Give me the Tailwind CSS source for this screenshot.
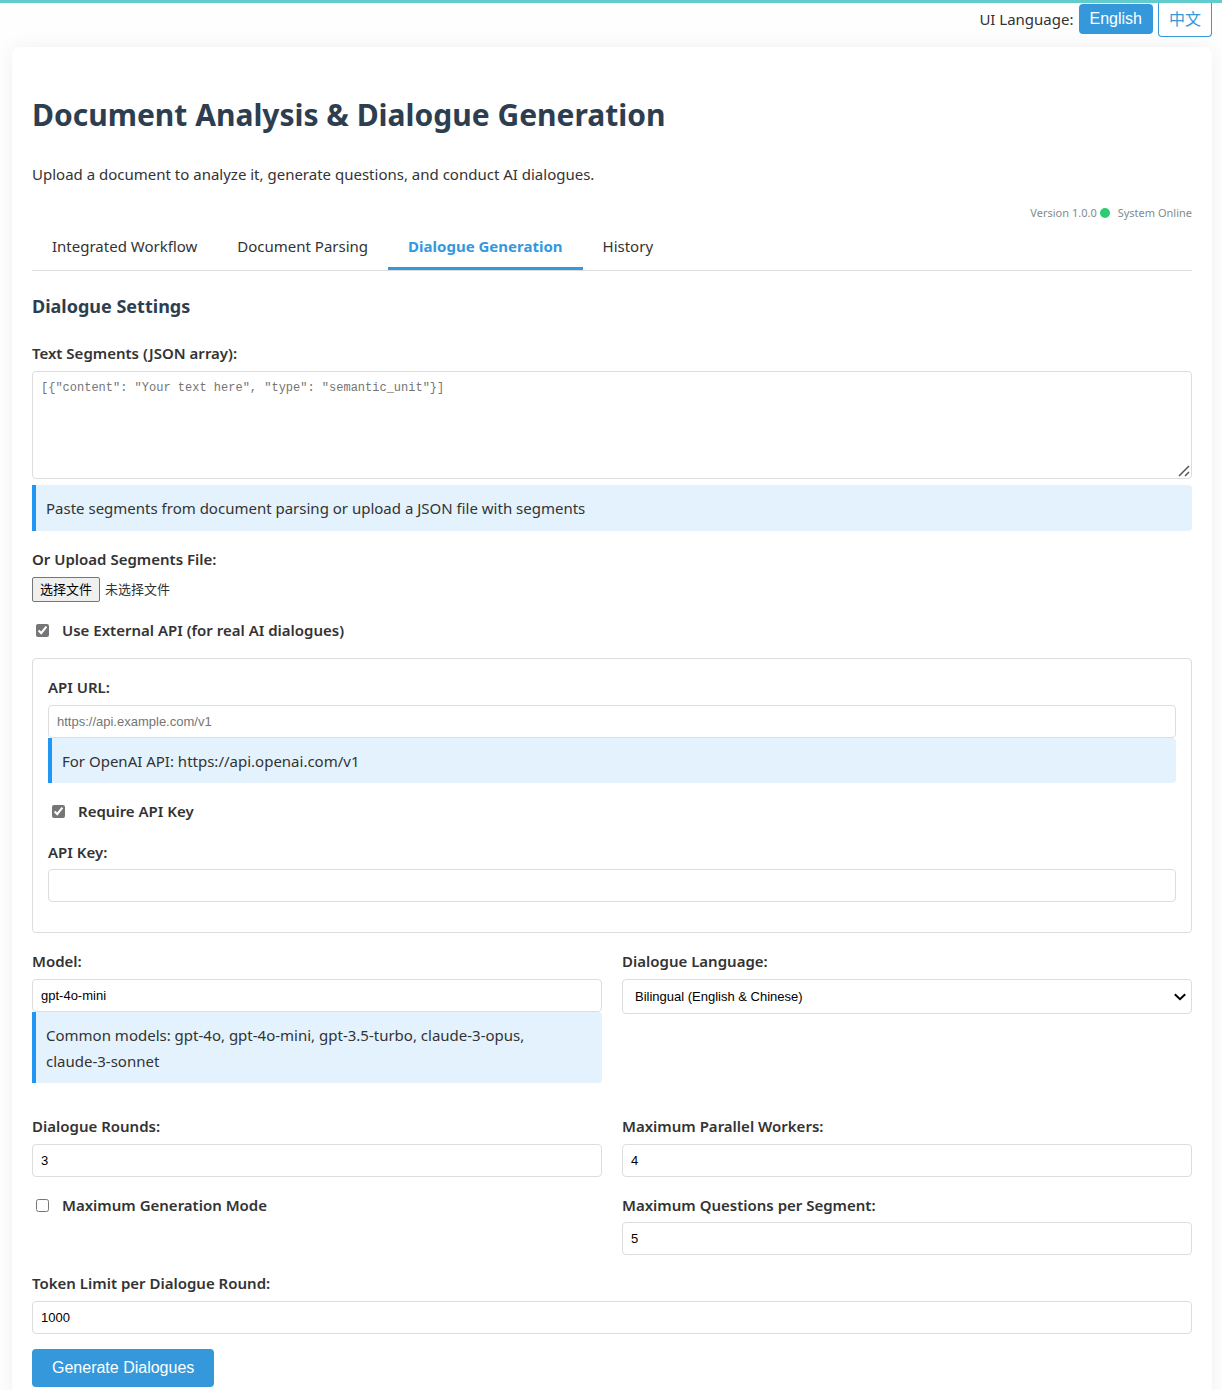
<!DOCTYPE html>
<html lang="en">
<head>
<meta charset="utf-8">
<meta name="viewport" content="width=device-width, initial-scale=1">
<title>Document Analysis &amp; Dialogue Generation</title>
<script src="https://cdn.jsdelivr.net/npm/@tailwindcss/browser@4"></script>
</head>
<body class="border-t-3 border-[#62cbcb] bg-[#fefefe] px-3 font-['Noto_Sans','Noto_Sans_CJK_SC',sans-serif] text-[15px] leading-[26px] text-[#333]">

<div class="-mr-3 flex items-start justify-end gap-[5px] pr-[10px]">
  <span class="pt-[3px]">UI Language:</span>
  <button type="button" class="mt-px h-[30px] rounded bg-[#3498db] px-[11px] font-['Liberation_Sans',sans-serif] text-base leading-5 text-white">English</button>
  <button type="button" class="h-[34px] rounded-b border border-t-0 border-[#3498db] bg-white px-[10px] font-['Liberation_Sans','Noto_Sans_CJK_SC',sans-serif] text-base leading-5 text-[#3498db]" lang="zh-CN">中文</button>
</div>

<main class="-mr-0.5 mt-[10px] rounded-lg bg-white p-5 shadow-[0_0_20px_rgba(0,0,0,0.06)]">
  <h1 class="mt-[22px] text-[30px] leading-[52px] font-bold text-[#2c3e50]">Document Analysis &amp; Dialogue Generation</h1>
  <p class="mt-5">Upload a document to analyze it, generate questions, and conduct AI dialogues.</p>

  <div class="mt-4 flex h-5 items-center justify-end text-[11px] leading-5 text-[#7f8c8d]">
    <span>Version 1.0.0</span>
    <span class="mr-2 ml-[3px] size-[10px] rounded-full bg-[#2ecc71]"></span>
    <span>System Online</span>
  </div>

  <nav class="mt-[2px] flex border-b border-[#ddd]">
    <a href="#workflow" class="border-b-3 border-transparent px-5 py-2">Integrated Workflow</a>
    <a href="#parsing" class="border-b-3 border-transparent px-5 py-2">Document Parsing</a>
    <a href="#dialogue" class="border-b-3 border-[#3498db] px-5 py-2 font-bold text-[#3498db]" aria-current="page">Dialogue Generation</a>
    <a href="#history" class="border-b-3 border-transparent px-5 py-2">History</a>
  </nav>

  <form>
    <h2 class="mt-5 text-[18px] leading-[30px] font-bold text-[#2c3e50]">Dialogue Settings</h2>

    <div class="mt-[19px]">
      <label for="segments" class="mb-[5px] block font-semibold">Text Segments (JSON array):</label>
      <div class="relative">
        <textarea id="segments" class="block h-[108px] w-full rounded border border-[#ddd] bg-white p-2 font-['Liberation_Mono',monospace] text-[12px] leading-4 text-black placeholder:text-[#757575]" placeholder='[{"content": "Your text here", "type": "semantic_unit"}]'></textarea>
        <svg class="pointer-events-none absolute right-[2px] bottom-[2px] size-3 bg-white" viewBox="0 0 12 12" fill="none" stroke="#555" stroke-width="1.5"><path d="M1 11 11 1M7 11l4-4"/></svg>
      </div>
      <p class="mt-[6px] rounded-r border-l-4 border-[#2196f3] bg-[#e3f2fd] p-[10px]">Paste segments from document parsing or upload a JSON file with segments</p>
    </div>

    <div class="mt-[15px]">
      <span class="mb-[5px] block font-semibold">Or Upload Segments File:</span>
      <label for="file" class="flex items-center gap-[5px] font-['Liberation_Sans','Noto_Sans_CJK_SC',sans-serif] text-[13px] leading-[23px]" lang="zh-CN">
        <input id="file" type="file" class="sr-only">
        <span class="rounded-xs border border-[#767676] bg-[#efefef] px-[7px] text-black">选择文件</span>
        <span>未选择文件</span>
      </label>
    </div>

    <label class="mt-[15px] ml-1 flex items-center gap-[13px] font-semibold"><input type="checkbox" checked class="size-[13px] accent-[#767676]">Use External API (for real AI dialogues)</label>

    <div class="mt-[15px] rounded border border-[#ddd] px-[15px] pt-[15px] pb-[30px]">
      <label for="url" class="mb-[5px] block font-semibold">API URL:</label>
      <input id="url" type="url" placeholder="https://api.example.com/v1" class="block h-[33px] w-full rounded border border-[#ddd] bg-white px-2 font-['Liberation_Sans',sans-serif] text-[13px] text-black placeholder:text-[#757575]">
      <p class="rounded-r border-l-4 border-[#2196f3] bg-[#e3f2fd] px-[10px] pt-[10px] pb-[9px]">For OpenAI API: https://api.openai.com/v1</p>
      <label class="mt-[15px] ml-1 flex items-center gap-[13px] font-semibold"><input type="checkbox" checked class="size-[13px] accent-[#767676]">Require API Key</label>
      <label for="key" class="mt-[15px] mb-1 block font-semibold">API Key:</label>
      <input id="key" type="password" class="block h-[33px] w-full rounded border border-[#ddd] bg-white px-2 font-['Liberation_Sans',sans-serif] text-[13px] text-black">
    </div>

    <div class="mt-[15px] grid grid-cols-2 gap-x-5">
      <div>
        <label for="model" class="mb-[5px] block font-semibold">Model:</label>
        <input id="model" type="text" value="gpt-4o-mini" class="block h-[33px] w-full rounded border border-[#ddd] bg-white px-2 font-['Liberation_Sans',sans-serif] text-[13px] text-black">
        <p class="rounded-r border-l-4 border-[#2196f3] bg-[#e3f2fd] px-[10px] pt-[10px] pb-[9px]">Common models: gpt-4o, gpt-4o-mini, gpt-3.5-turbo, claude-3-opus, <span class="whitespace-nowrap">claude-3-sonnet</span></p>
      </div>
      <div>
        <label for="lang" class="mb-[5px] block font-semibold">Dialogue Language:</label>
        <div class="relative">
          <select id="lang" class="block h-[35px] w-full appearance-none rounded border border-[#ddd] bg-white px-3 font-['Liberation_Sans',sans-serif] text-[13px] text-black"><option>Bilingual (English &amp; Chinese)</option></select>
          <svg class="pointer-events-none absolute top-[14px] right-[6px] h-2 w-3" viewBox="0 0 12 8" fill="none" stroke="#000" stroke-width="2"><path d="M.8 1.2 6 6.2l5.2-5"/></svg>
        </div>
      </div>
      <div class="mt-[30px]">
        <label for="rounds" class="mb-[5px] block font-semibold">Dialogue Rounds:</label>
        <input id="rounds" type="number" value="3" class="block h-[33px] w-full rounded border border-[#ddd] bg-white px-2 font-['Liberation_Sans',sans-serif] text-[13px] text-black">
      </div>
      <div class="mt-[30px]">
        <label for="workers" class="mb-[5px] block font-semibold">Maximum Parallel Workers:</label>
        <input id="workers" type="number" value="4" class="block h-[33px] w-full rounded border border-[#ddd] bg-white px-2 font-['Liberation_Sans',sans-serif] text-[13px] text-black">
      </div>
      <div class="mt-[15px]">
        <label class="ml-1 flex items-center gap-[13px] font-semibold"><input type="checkbox" class="size-[13px]">Maximum Generation Mode</label>
      </div>
      <div class="mt-[15px]">
        <label for="questions" class="mb-1 block font-semibold">Maximum Questions per Segment:</label>
        <input id="questions" type="number" value="5" class="block h-[33px] w-full rounded border border-[#ddd] bg-white px-2 font-['Liberation_Sans',sans-serif] text-[13px] text-black">
      </div>
    </div>

    <div class="mt-[15px]">
      <label for="tokens" class="mb-[5px] block font-semibold">Token Limit per Dialogue Round:</label>
      <input id="tokens" type="number" value="1000" class="block h-[33px] w-full rounded border border-[#ddd] bg-white px-2 font-['Liberation_Sans',sans-serif] text-[13px] text-black">
    </div>

    <button type="submit" class="mt-[15px] block h-[38px] rounded bg-[#3498db] px-5 font-['Liberation_Sans',sans-serif] text-base leading-5 text-white">Generate Dialogues</button>
  </form>
</main>
</body>
</html>
